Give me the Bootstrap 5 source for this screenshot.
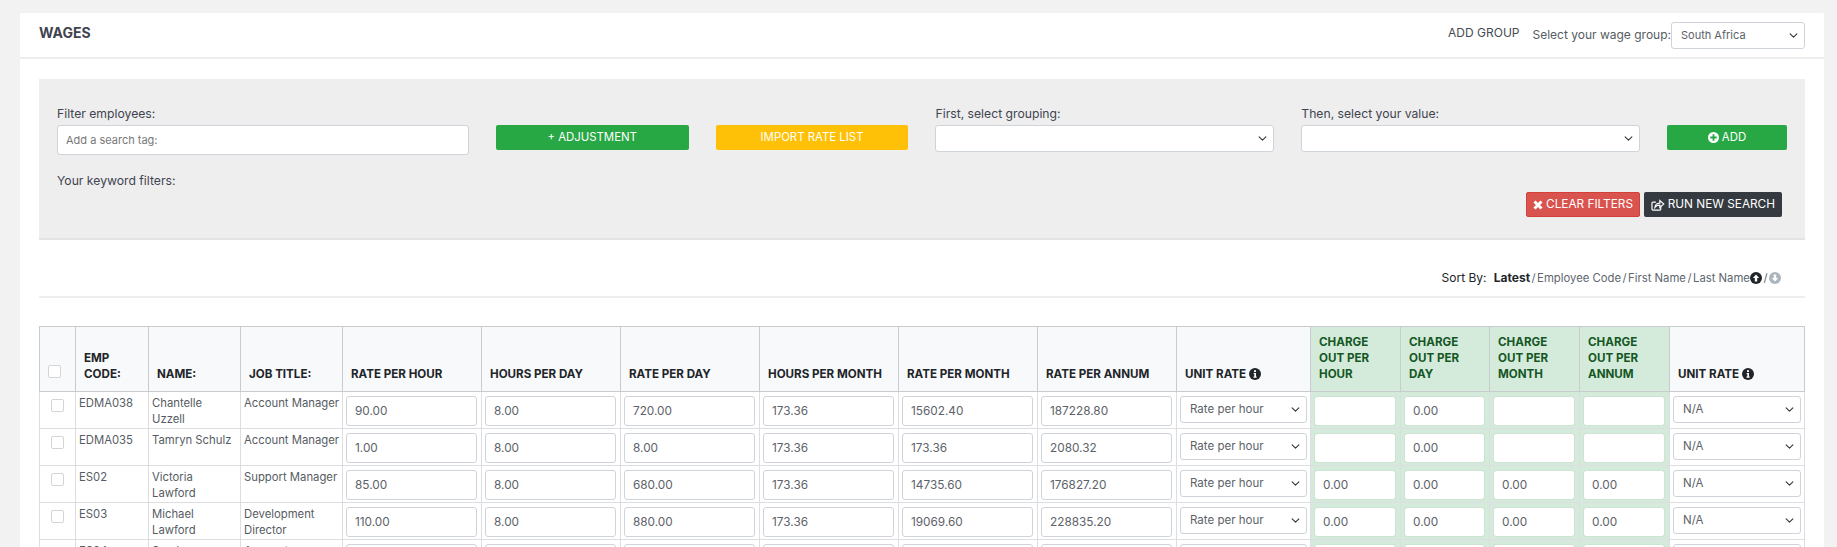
<!DOCTYPE html>
<html lang="en">
<head>
<meta charset="utf-8">
<title>Wages</title>
<link href="https://cdn.jsdelivr.net/npm/bootstrap@5.3.0/dist/css/bootstrap.min.css" rel="stylesheet">
<style>
html,body{height:547px;overflow:hidden}
body{background:#f2f2f2;font-family:Inter,"Open Sans",sans-serif;font-size:11.3px;color:#565c63;padding:13px 13px 0 20px}
.wage-card{background:#fff;height:600px;border-radius:2px}
.wage-head{height:46px;border-bottom:2px solid #eee;padding:0 19px}
.wage-title{font-size:14px;font-weight:700;color:#3f4450;margin:0 0 4px}
.wage-group{font-size:12px;color:#565c63}
.add-group{margin:0 13px 4px 0;color:#454b52}
.wage-top-sel{width:134px;height:27px}
.form-select,.form-control{font-size:11.8px;color:#5c6269;border-color:#ced4da;border-radius:3px;box-shadow:none}
.form-select{padding:0 16px 0 9px;background-size:11px 9px;background-position:right 5px center;font-size:11.5px}
.wage-top-sel.form-select{font-size:11px}
.form-control{padding:0 8px}
.form-control::placeholder{color:#777;font-size:11px}
.wage-body{padding:20px 19px 0}
.filter-panel{background:#eee;height:161px;border-bottom:2px solid #e2e3e3;padding:26px 18px 0}
.filter-label{font-size:12.2px;color:#3f4450;height:20px;line-height:18px}
.f-search{width:412px;margin-right:27px}
.f-btn{width:193px;margin-right:27px;padding-top:20px}
.f-sel{width:339px;margin-right:27px}
.f-sel-end{width:339px;margin-right:27px}
.f-add{width:120px;padding-top:20px}
.f-search .form-control{height:30px}
.f-sel .form-select,.f-sel-end .form-select{height:27px}
.flat-btn{height:25px;font-size:11.4px;border-radius:2px;padding:0 6px;color:#fff;border:1px solid transparent;display:inline-flex;align-items:center;justify-content:center;gap:3px;white-space:nowrap}
.flat-btn:hover{color:#fff}
.b-green{background:#28a745;width:100%}
.b-amber{background:#ffc107;width:100%}
.b-red{background:#d9534f;border-color:#d43f3a;width:114px;font-size:11.8px}
.b-dark{background:#343a40;width:138px;font-size:11.8px}
.keyword-row{margin-top:18px;height:45px}
.keyword-label{font-size:12.2px;color:#3f4450;line-height:16px}
.action-btns{margin-top:19px;margin-right:5px}
.sort-row{height:58px;border-bottom:2px solid #eee;font-size:11.3px;padding:30px 24px 0 0;line-height:16px;color:#60666d}
.sort-row b{color:#212529;font-weight:700;font-size:12px}
.sort-label{color:#212529;font-size:12px}
.sort-row .sep{margin:0 1.5px}
.sort-ico{vertical-align:-2px}
.wage-table{table-layout:fixed;width:1766px;margin:28px 0 0;border-collapse:collapse;color:#565c63;font-size:11.3px}
.wage-table th,.wage-table td{border:1px solid #dcdee1;padding:0}
.wage-table thead th{background:#f8f9fa;height:65px;vertical-align:bottom;padding:0 7px 9px 8px;font-size:11.6px;line-height:16px;font-weight:700;color:#212529;border-color:#c9cbcf}
.wage-table thead th.charge{background:#d4ebdb;color:#155724;padding-right:20px}
.wage-table tbody td{height:37px;vertical-align:top;line-height:16px;padding:4px 4px 0 3px}
.wage-table tbody td.charge{background:#d4ebdb}
.wage-table tbody td.txt{padding:3px 5px 0 3px}
.wage-table tbody td.job{padding-right:0}
.wage-table tbody td.sel{padding-right:3px}
.wage-table .form-control{height:30px;width:100%}
.wage-table .form-select{height:27px;width:100%}
.wage-table td.charge .form-control{border-color:#cfe3d5}
.cbox{display:block;width:13px;height:13px;border:1px solid #d3d5d8;background:#fff;border-radius:2px;margin:3px auto 0}
th .cbox{margin:0 0 4px 0}
.c1{width:36px}.c2{width:73px}.c3{width:92px}.c4{width:102px}.c5,.c6,.c7{width:139px}.c8,.c9,.c10{width:139px}.c11{width:134px}.c12{width:90px}.c13{width:89px}.c14,.c15{width:90px}.c16{width:135px}
.info{vertical-align:-2px}
</style>
</head>
<body>
<div class="wage-card">
  <div class="wage-head d-flex align-items-center justify-content-between">
    <h1 class="wage-title">WAGES</h1>
    <div class="d-flex align-items-center wage-group">
      <span class="add-group">ADD GROUP</span>
      <span>Select your wage group:</span>
      <select class="form-select wage-top-sel"><option>South Africa</option></select>
    </div>
  </div>
  <div class="wage-body">
    <div class="filter-panel">
      <div class="d-flex">
        <div class="f-search"><div class="filter-label">Filter employees:</div><input class="form-control" placeholder="Add a search tag:"></div>
        <div class="f-btn"><a class="flat-btn b-green text-decoration-none" href="#">+ ADJUSTMENT</a></div>
        <div class="f-btn"><a class="flat-btn b-amber text-decoration-none" href="#">IMPORT RATE LIST</a></div>
        <div class="f-sel"><div class="filter-label">First, select grouping:</div><select class="form-select"></select></div>
        <div class="f-sel-end"><div class="filter-label">Then, select your value:</div><select class="form-select"></select></div>
        <div class="f-add"><a class="flat-btn b-green text-decoration-none" href="#"><svg width="11" height="11" viewBox="0 0 12 12"><circle cx="6" cy="6" r="6" fill="#fff"/><path d="M5 2.500h2V5h2.500v2H7v2.500H5V7H2.500V5H5z" fill="#28a745"/></svg>ADD</a></div>
      </div>
      <div class="d-flex justify-content-between keyword-row">
        <div class="keyword-label">Your keyword filters:</div>
        <div class="d-flex gap-1 action-btns align-items-start">
          <a class="flat-btn b-red text-decoration-none" href="#"><svg width="10" height="10" viewBox="0 0 10 10"><path d="M1.500 1.500l7 7m0-7l-7 7" stroke="#fff" stroke-width="3" fill="none"/></svg>CLEAR FILTERS</a>
          <a class="flat-btn b-dark text-decoration-none" href="#"><svg width="14" height="12" viewBox="0 0 14 12" fill="none" stroke="#fff" stroke-width="1.200"><path d="M10 8v2.200a1 1 0 0 1-1 1H2a1 1 0 0 1-1-1V4a1 1 0 0 1 1-1h3"/><path d="M4 8.500C4 5.500 6.500 4 9 4V1.500L13 5 9 8.500V6.200C7 6.200 5 6.800 4 8.500z"/></svg>RUN NEW SEARCH</a>
        </div>
      </div>
    </div>
    <div class="sort-row text-end">
      <span class="sort-label me-1">Sort By:</span> <b>Latest</b><span class="sep">/</span>Employee Code<span class="sep">/</span>First Name<span class="sep">/</span>Last Name<svg class="sort-ico" width="12" height="12" viewBox="0 0 12 12"><circle cx="6" cy="6" r="6" fill="#212529"/><path d="M6 2.500L9.200 6H7.200v3.500H4.800V6H2.800z" fill="#fff"/></svg><span class="sep">/</span><svg class="sort-ico" width="12" height="12" viewBox="0 0 12 12"><circle cx="6" cy="6" r="6" fill="#adb5bd"/><path d="M6 9.500L2.800 6H4.800V2.500h2.400V6h2z" fill="#fff"/></svg>
    </div>
    <table class="wage-table">
      <colgroup><col class="c1"><col class="c2"><col class="c3"><col class="c4"><col class="c5"><col class="c6"><col class="c7"><col class="c8"><col class="c9"><col class="c10"><col class="c11"><col class="c12"><col class="c13"><col class="c14"><col class="c15"><col class="c16"></colgroup>
      <thead><tr>
        <th><span class="cbox"></span></th><th>EMP CODE:</th><th>NAME:</th><th>JOB TITLE:</th><th>RATE PER HOUR</th><th>HOURS PER DAY</th><th>RATE PER DAY</th><th>HOURS PER MONTH</th><th>RATE PER MONTH</th><th>RATE PER ANNUM</th>
        <th>UNIT RATE <svg class="info" width="12" height="12" viewBox="0 0 12 12"><circle cx="6" cy="6" r="6" fill="#212529"/><path d="M5 2.300h2v1.700H5zM4.600 5h2.400v3.600h.6v1.100H4.500V8.600h.8V6.100h-.7z" fill="#fff"/></svg></th>
        <th class="charge">CHARGE OUT PER HOUR</th><th class="charge">CHARGE OUT PER DAY</th><th class="charge">CHARGE OUT PER MONTH</th><th class="charge">CHARGE OUT PER ANNUM</th>
        <th>UNIT RATE <svg class="info" width="12" height="12" viewBox="0 0 12 12"><circle cx="6" cy="6" r="6" fill="#212529"/><path d="M5 2.300h2v1.700H5zM4.600 5h2.400v3.600h.6v1.100H4.500V8.600h.8V6.100h-.7z" fill="#fff"/></svg></th>
      </tr></thead>
      <tbody>
        <tr><td><span class="cbox"></span></td><td class="txt">EDMA038</td><td class="txt">Chantelle Uzzell</td><td class="txt job">Account Manager</td><td><input class="form-control" value="90.00"></td><td><input class="form-control" value="8.00"></td><td><input class="form-control" value="720.00"></td><td><input class="form-control" value="173.36"></td><td><input class="form-control" value="15602.40"></td><td><input class="form-control" value="187228.80"></td><td class="sel"><select class="form-select"><option>Rate per hour</option></select></td><td class="charge"><input class="form-control"></td><td class="charge"><input class="form-control" value="0.00"></td><td class="charge"><input class="form-control"></td><td class="charge"><input class="form-control"></td><td class="sel"><select class="form-select"><option>N/A</option></select></td></tr>
        <tr><td><span class="cbox"></span></td><td class="txt">EDMA035</td><td class="txt">Tamryn Schulz</td><td class="txt job">Account Manager</td><td><input class="form-control" value="1.00"></td><td><input class="form-control" value="8.00"></td><td><input class="form-control" value="8.00"></td><td><input class="form-control" value="173.36"></td><td><input class="form-control" value="173.36"></td><td><input class="form-control" value="2080.32"></td><td class="sel"><select class="form-select"><option>Rate per hour</option></select></td><td class="charge"><input class="form-control"></td><td class="charge"><input class="form-control" value="0.00"></td><td class="charge"><input class="form-control"></td><td class="charge"><input class="form-control"></td><td class="sel"><select class="form-select"><option>N/A</option></select></td></tr>
        <tr><td><span class="cbox"></span></td><td class="txt">ES02</td><td class="txt">Victoria Lawford</td><td class="txt job">Support Manager</td><td><input class="form-control" value="85.00"></td><td><input class="form-control" value="8.00"></td><td><input class="form-control" value="680.00"></td><td><input class="form-control" value="173.36"></td><td><input class="form-control" value="14735.60"></td><td><input class="form-control" value="176827.20"></td><td class="sel"><select class="form-select"><option>Rate per hour</option></select></td><td class="charge"><input class="form-control" value="0.00"></td><td class="charge"><input class="form-control" value="0.00"></td><td class="charge"><input class="form-control" value="0.00"></td><td class="charge"><input class="form-control" value="0.00"></td><td class="sel"><select class="form-select"><option>N/A</option></select></td></tr>
        <tr><td><span class="cbox"></span></td><td class="txt">ES03</td><td class="txt">Michael Lawford</td><td class="txt job">Development Director</td><td><input class="form-control" value="110.00"></td><td><input class="form-control" value="8.00"></td><td><input class="form-control" value="880.00"></td><td><input class="form-control" value="173.36"></td><td><input class="form-control" value="19069.60"></td><td><input class="form-control" value="228835.20"></td><td class="sel"><select class="form-select"><option>Rate per hour</option></select></td><td class="charge"><input class="form-control" value="0.00"></td><td class="charge"><input class="form-control" value="0.00"></td><td class="charge"><input class="form-control" value="0.00"></td><td class="charge"><input class="form-control" value="0.00"></td><td class="sel"><select class="form-select"><option>N/A</option></select></td></tr>
        <tr><td><span class="cbox"></span></td><td class="txt">ES04</td><td class="txt">Sandra Lawford</td><td class="txt job">Accounts Manager</td><td><input class="form-control" value="85.00"></td><td><input class="form-control" value="8.00"></td><td><input class="form-control" value="680.00"></td><td><input class="form-control" value="173.36"></td><td><input class="form-control" value="14735.60"></td><td><input class="form-control" value="176827.20"></td><td class="sel"><select class="form-select"><option>Rate per hour</option></select></td><td class="charge"><input class="form-control" value="0.00"></td><td class="charge"><input class="form-control" value="0.00"></td><td class="charge"><input class="form-control" value="0.00"></td><td class="charge"><input class="form-control" value="0.00"></td><td class="sel"><select class="form-select"><option>N/A</option></select></td></tr>
      </tbody>
    </table>
  </div>
</div>
<script src="https://cdn.jsdelivr.net/npm/bootstrap@5.3.0/dist/js/bootstrap.bundle.min.js"></script>
</body>
</html>
